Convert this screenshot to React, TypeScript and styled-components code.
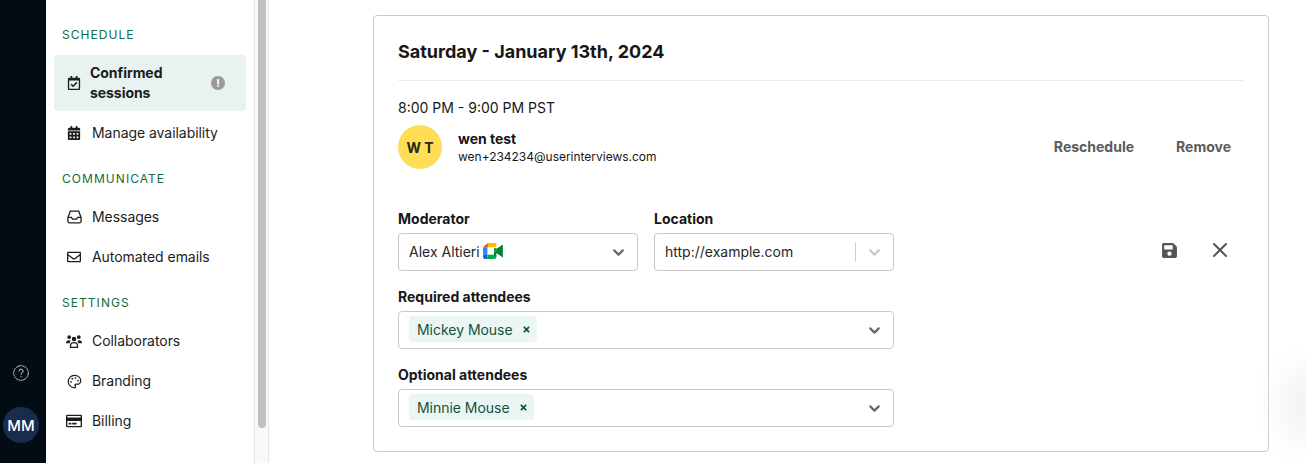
import React from "react";
import styled, { createGlobalStyle } from "styled-components";
import { FaCalendarAlt, FaRegCalendarCheck, FaRegCreditCard, FaRegEnvelope, FaSave, FaTimes } from "react-icons/fa";
import { LuChevronDown, LuPalette, LuX } from "react-icons/lu";

const GlobalStyle = createGlobalStyle`
  html, body {
    margin: 0;
    height: 100%;
    overflow: hidden;
    background: #fff;
    font-family: Inter, "Liberation Sans", sans-serif;
    color: #171717;
  }
  * { box-sizing: border-box; }
`;

const Page = styled.div`
  display: flex;
  height: 463px;
  width: 1306px;
  overflow: hidden;
  position: relative;
`;

const Rail = styled.div`
  width: 46px;
  flex: none;
  background: #020c14;
  display: flex;
  flex-direction: column;
  align-items: center;
  justify-content: flex-end;
  padding: 0 4px 20px 0;
`;

const HelpIcon = styled.svg`
  width: 16px;
  height: 16px;
  margin-bottom: 26px;
`;

const UserBubble = styled.div`
  width: 36px;
  height: 36px;
  border-radius: 50%;
  background: #1a2c4b;
  color: #fff;
  font-size: 15px;
  font-weight: 500;
  flex: none;
  display: flex;
  align-items: center;
  justify-content: center;
`;

const Sidebar = styled.nav`
  width: 208px;
  flex: none;
  padding: 27px 8px 0;
`;

const SectionLabel = styled.div<{ $first?: boolean }>`
  font-size: 12px;
  line-height: 15px;
  letter-spacing: 1.05px;
  color: #146b3a;
  padding-left: 8px;
  margin-bottom: ${(p) => (p.$first ? "13px" : "11px")};
`;

const NavGroup = styled.div`
  margin-bottom: 18px;
`;

const NavItem = styled.div<{ $active?: boolean }>`
  display: flex;
  align-items: center;
  height: ${(p) => (p.$active ? "56px" : "40px")};
  margin-bottom: ${(p) => (p.$active ? "2px" : "0")};
  padding-left: 12px;
  padding-right: 21px;
  border-radius: 4px;
  background: ${(p) => (p.$active ? "#e8f2f0" : "transparent")};
  font-size: 14px;
  font-weight: ${(p) => (p.$active ? 700 : 400)};
  line-height: 20px;
  color: #1c1c1c;
`;

const NavIcon = styled.span<{ $active?: boolean }>`
  width: 16px;
  display: flex;
  justify-content: center;
  margin-right: ${(p) => (p.$active ? "8px" : "10px")};
  font-size: 14px;
  flex: none;
`;

const NavText = styled.span`
  flex: 1;
  white-space: pre-line;
  letter-spacing: -0.05px;
`;

const Alert = styled.span`
  width: 14px;
  height: 14px;
  border-radius: 50%;
  background: #9a9a9a;
  color: #fff;
  font-size: 10px;
  font-weight: 800;
  display: flex;
  align-items: center;
  justify-content: center;
`;

const ScrollTrack = styled.div`
  width: 15px;
  flex: none;
  background: #f9f9f9;
  border-left: 1px solid #e6e6e6;
  border-right: 1px solid #e6e6e6;
  padding: 0 2px 0 3px;
`;

const ScrollThumb = styled.div`
  height: 428px;
  background: #c1c1c1;
  border-radius: 0 0 4px 4px;
`;

const Main = styled.main`
  flex: 1;
  padding: 15px 37px 0 104px;
`;

const Card = styled.section`
  height: 437px;
  border: 1px solid #c9c9c9;
  border-radius: 4px;
  padding: 24px 24px 0;
`;

const Title = styled.h2`
  margin: 0;
  font-size: 18px;
  line-height: 24px;
  font-weight: 700;
  color: #171717;
  padding-bottom: 16px;
  border-bottom: 1px solid #ebebeb;
`;

const TimeRow = styled.div`
  font-size: 14px;
  line-height: 20px;
  margin-top: 17px;
`;

const PersonRow = styled.div`
  display: flex;
  align-items: center;
  margin-top: 7px;
`;

const Initials = styled.div`
  width: 44px;
  height: 44px;
  border-radius: 50%;
  background: #ffdd55;
  color: #2a2614;
  font-size: 14px;
  font-weight: 700;
  display: flex;
  align-items: center;
  justify-content: center;
  margin-right: 16px;
`;

const PersonInfo = styled.div`
  flex: 1;
  letter-spacing: -0.02px;
  padding-top: 2px;
`;

const PersonName = styled.div`
  font-size: 14px;
  line-height: 18px;
  font-weight: 700;
`;

const PersonEmail = styled.div`
  font-size: 12px;
  line-height: 18px;
`;

const TextAction = styled.span<{ $gap?: number }>`
  font-size: 14px;
  font-weight: 700;
  color: #5a5a5a;
  padding-bottom: 2px;
  margin-left: ${(p) => p.$gap ?? 0}px;
  margin-right: ${(p) => (p.$gap ? 13 : 0)}px;
`;

const FormGrid = styled.div`
  display: grid;
  grid-template-columns: 240px 240px 1fr;
  column-gap: 16px;
  margin-top: 40px;
`;

const Field = styled.div<{ $wide?: boolean }>`
  grid-column: ${(p) => (p.$wide ? "1 / span 2" : "auto")};
  margin-bottom: 16px;
`;

const FieldLabel = styled.div`
  font-size: 14px;
  line-height: 20px;
  font-weight: 700;
  margin-bottom: 4px;
  color: #171717;
`;

const SelectBox = styled.div`
  height: 38px;
  border: 1px solid #c9c9c9;
  border-radius: 4px;
  display: flex;
  align-items: center;
  padding: 0 10px;
  font-size: 14px;
  color: #262626;
  background: #fff;
`;

const SelectValue = styled.div`
  flex: 1;
  display: flex;
  align-items: center;
  gap: 3px;
  margin-bottom: 2px;
`;

const Divider = styled.span`
  width: 1px;
  height: 20px;
  background: #cccccc;
  margin-right: 10px;
`;

const Chevron = styled(LuChevronDown)<{ $muted?: boolean }>`
  font-size: 17px;
  stroke-width: 3px;
  color: ${(p) => (p.$muted ? "#c9c9c9" : "#666")};
`;

const Tag = styled.span`
  display: inline-flex;
  align-items: center;
  height: 26px;
  padding: 0 6px 0 8px;
  border-radius: 4px;
  background: #ebf6f4;
  color: #14523a;
  font-size: 14px;
  letter-spacing: -0.03px;
`;

const TagClose = styled(FaTimes)`
  font-size: 9px;
  margin-left: 9px;
`;

const EditActions = styled.div`
  display: flex;
  align-items: center;
  justify-content: flex-end;
  gap: 30px;
  height: 38px;
  margin-top: 22px;
  padding-right: 12px;
  color: #555;
`;

const Glow = styled.div`
  position: absolute;
  right: -40px;
  top: 365px;
  width: 70px;
  height: 80px;
  border-radius: 50%;
  background: #f5f5f5;
  filter: blur(12px);
`;

const MeetIcon = () => (
  <svg width="20" height="16" viewBox="0 0 21 17">
    <path d="M5 0h9v4.500H5z" fill="#fbbc04" />
    <path d="M5 0v4.500H0z" fill="#ea4335" />
    <path d="M0 4.500h4.500v8H0z" fill="#2684fc" />
    <path d="M0 12.500h4.500V17H2a2 2 0 0 1-2-2z" fill="#0066da" />
    <path d="M4.500 12.500H14V15a2 2 0 0 1-2 2H4.500z" fill="#00ac47" />
    <path d="M14 1v4.500h-2.500V8.500L14 6.500l7-5V15.500l-7-5V15l-2.500-2.500V8.500H14z" fill="#00832d" />
    <path d="M14 4.500V12l-2.500-3.500z" fill="#00ac47" />
  </svg>
);

const InboxIcon = () => (
  <svg width="15" height="14" viewBox="0 0 15 14" fill="none" stroke="currentColor" strokeWidth="1.300">
    <path d="M3.300 1.200h8.400l2.400 6.300v3.800a1.500 1.500 0 0 1-1.500 1.500H2.400a1.500 1.500 0 0 1-1.500-1.500V7.500z" />
    <path d="M1 7.300h3.400l1 1.800h4.200l1-1.800H14" />
  </svg>
);

// three people, the middle one in front with an outlined body
const PeopleIcon = () => (
  <svg width="18" height="15" viewBox="0 0 17 14" fill="currentColor">
    <circle cx="3.400" cy="2.300" r="2" />
    <circle cx="13.600" cy="2.300" r="2" />
    <circle cx="8.500" cy="4.300" r="2.400" />
    <path d="M0 8.800c0-2.100 1.200-3.200 3-3.200 .8 0 1.400.2 1.900.6-.6.800-.9 1.600-.9 2.600H0z" />
    <path d="M17 8.800c0-2.100-1.200-3.200-3-3.200-.8 0-1.400.2-1.900.6.600.8.900 1.600.9 2.600h4z" />
    <path
      d="M4.800 13.300v-2c0-1.900 1.500-3.200 3.700-3.200s3.700 1.300 3.700 3.200v2z"
      fill="none"
      stroke="currentColor"
      strokeWidth="1.400"
    />
  </svg>
);

const schedule = [{ label: "Manage availability", icon: <FaCalendarAlt /> }];
const communicate = [
  { label: "Messages", icon: <InboxIcon /> },
  { label: "Automated emails", icon: <FaRegEnvelope /> },
];
const settings = [
  { label: "Collaborators", icon: <PeopleIcon /> },
  { label: "Branding", icon: <LuPalette size={15} /> },
  { label: "Billing", icon: <FaRegCreditCard size={16} /> },
];

const renderItems = (items: { label: string; icon: React.ReactNode }[]) =>
  items.map((item) => (
    <NavItem key={item.label}>
      <NavIcon>{item.icon}</NavIcon>
      <NavText>{item.label}</NavText>
    </NavItem>
  ));

const App: React.FC = () => {
  return (
    <Page>
      <GlobalStyle />
      <Rail>
        <HelpIcon viewBox="0 0 16 16" fill="none" stroke="#d8d8d8" strokeWidth="1">
          <circle cx="8" cy="8" r="7.300" strokeDasharray="2 0.400" />
          <path d="M5.900 6.200a2.100 2.100 0 1 1 3.200 1.800c-.7.400-1.100.8-1.100 1.700" />
          <path d="M8 11.200v1.100" />
        </HelpIcon>
        <UserBubble>MM</UserBubble>
      </Rail>

      <Sidebar>
        <NavGroup>
          <SectionLabel $first>SCHEDULE</SectionLabel>
          <NavItem $active>
            <NavIcon $active>
              <FaRegCalendarCheck />
            </NavIcon>
            <NavText>{"Confirmed\nsessions"}</NavText>
            <Alert>!</Alert>
          </NavItem>
          {renderItems(schedule)}
        </NavGroup>
        <NavGroup>
          <SectionLabel>COMMUNICATE</SectionLabel>
          {renderItems(communicate)}
        </NavGroup>
        <NavGroup>
          <SectionLabel>SETTINGS</SectionLabel>
          {renderItems(settings)}
        </NavGroup>
      </Sidebar>

      <ScrollTrack>
        <ScrollThumb />
      </ScrollTrack>

      <Main>
        <Card>
          <Title>Saturday - January 13th, 2024</Title>
          <TimeRow>8:00 PM - 9:00 PM PST</TimeRow>
          <PersonRow>
            <Initials>W T</Initials>
            <PersonInfo>
              <PersonName>wen test</PersonName>
              <PersonEmail>wen+234234@userinterviews.com</PersonEmail>
            </PersonInfo>
            <TextAction>Reschedule</TextAction>
            <TextAction $gap={42}>Remove</TextAction>
          </PersonRow>

          <FormGrid>
            <Field>
              <FieldLabel>Moderator</FieldLabel>
              <SelectBox>
                <SelectValue>
                  Alex Altieri <MeetIcon />
                </SelectValue>
                <Chevron />
              </SelectBox>
            </Field>
            <Field>
              <FieldLabel>Location</FieldLabel>
              <SelectBox>
                <SelectValue>http://example.com</SelectValue>
                <Divider />
                <Chevron $muted />
              </SelectBox>
            </Field>
            <EditActions>
              <FaSave size={17} />
              <LuX size={24} strokeWidth={2} />
            </EditActions>
            <Field $wide>
              <FieldLabel>Required attendees</FieldLabel>
              <SelectBox>
                <SelectValue>
                  <Tag>
                    Mickey Mouse
                    <TagClose />
                  </Tag>
                </SelectValue>
                <Chevron />
              </SelectBox>
            </Field>
            <div />
            <Field $wide>
              <FieldLabel>Optional attendees</FieldLabel>
              <SelectBox>
                <SelectValue>
                  <Tag>
                    Minnie Mouse
                    <TagClose />
                  </Tag>
                </SelectValue>
                <Chevron />
              </SelectBox>
            </Field>
          </FormGrid>
        </Card>
      </Main>
      <Glow />
    </Page>
  );
};

export default App;
